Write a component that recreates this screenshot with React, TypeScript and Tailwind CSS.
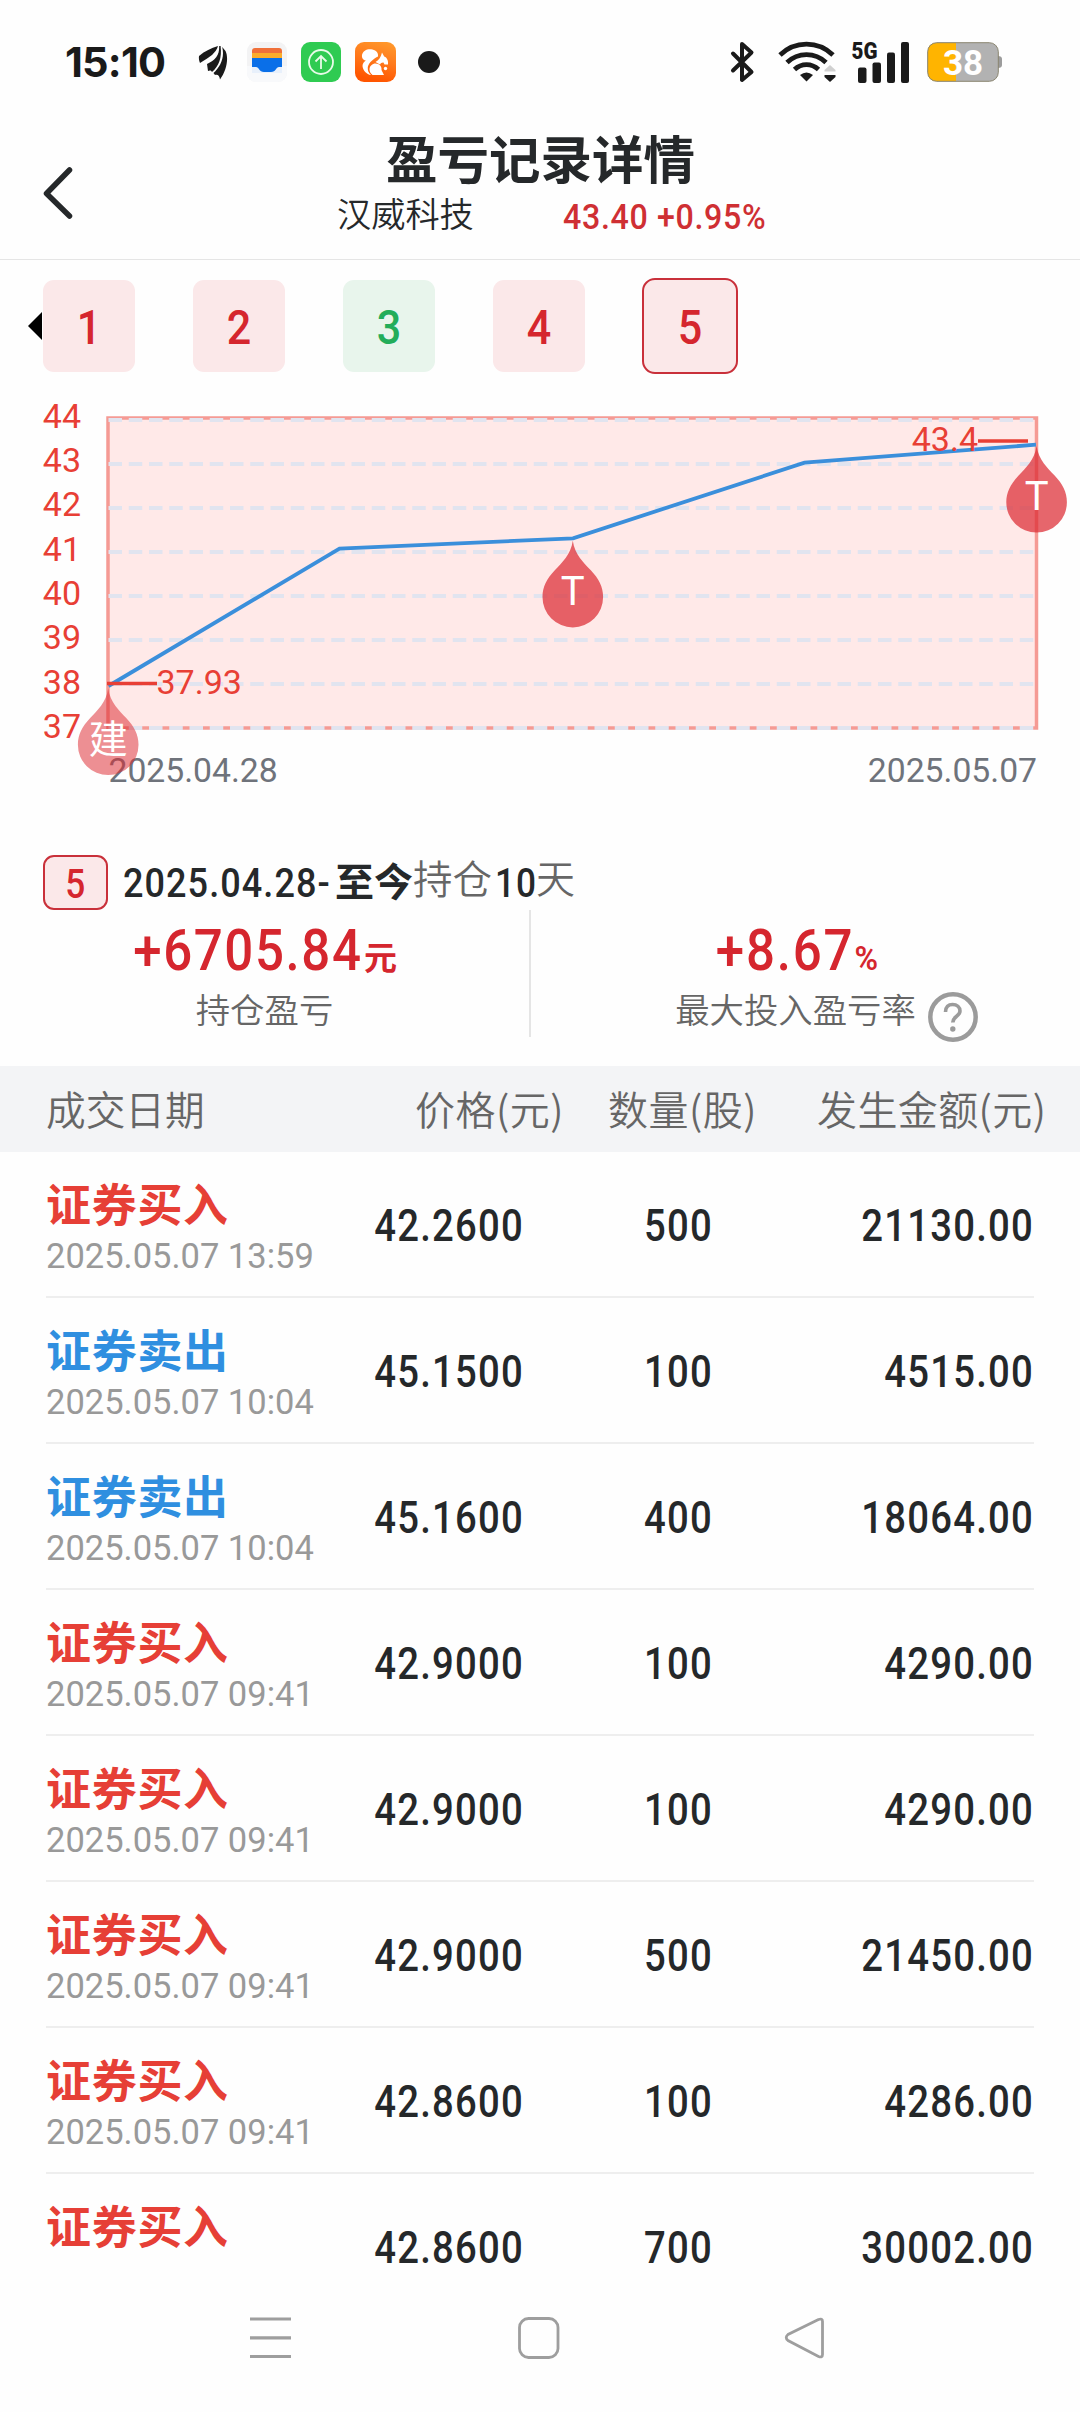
type Trade = {
  side: "buy" | "sell";
  time: string;
  price: string;
  amount: string;
  total: string;
};

const trades: Trade[] = [
  { side: "buy", time: "2025.05.07 13:59", price: "42.2600", amount: "500", total: "21130.00" },
  { side: "sell", time: "2025.05.07 10:04", price: "45.1500", amount: "100", total: "4515.00" },
  { side: "sell", time: "2025.05.07 10:04", price: "45.1600", amount: "400", total: "18064.00" },
  { side: "buy", time: "2025.05.07 09:41", price: "42.9000", amount: "100", total: "4290.00" },
  { side: "buy", time: "2025.05.07 09:41", price: "42.9000", amount: "100", total: "4290.00" },
  { side: "buy", time: "2025.05.07 09:41", price: "42.9000", amount: "500", total: "21450.00" },
  { side: "buy", time: "2025.05.07 09:41", price: "42.8600", amount: "100", total: "4286.00" },
  { side: "buy", time: "", price: "42.8600", amount: "700", total: "30002.00" },
];

const tabs = [
  { id: 1, profit: true },
  { id: 2, profit: true },
  { id: 3, profit: false },
  { id: 4, profit: true },
  { id: 5, profit: true },
];

const axis = [44, 43, 42, 41, 40, 39, 38, 37];

// price -> y inside the chart svg
const priceY = (price: number) => 328 - (price - 37) * 44;

const StatusBar = () => (
  <div className="flex h-[124px] flex-none items-center pl-[65px] text-[#1a1a1a]">
    <span className="w-[133px] pt-px font-['Inter'] text-[41.5px] font-bold leading-none tracking-[-0.8px]">
      15:10
    </span>
    <svg width="30" height="36" viewBox="0 0 30 36" fill="#1a1a1a">
      <path d="M1 12C7 7 13 4 20 2C18 9 12 13 2 19C1 17 .6 14 1 12Z" />
      <path d="M21.200 2C21.500 12 17 16 9 20L10 27C12 26 13.500 26.500 14 28C21 22 24 14 22.600 2Z" />
      <path d="M24.200 3C27 14 22 23 15.500 29L17 31C20 30 21.500 32 22 35.500C28.500 27 31 14 27.500 7Z" />
    </svg>
    <svg className="ml-[19px]" width="40" height="40" viewBox="0 0 40 40">
      <rect width="40" height="40" rx="9" fill="#f3f3f4" />
      <path d="M0 24h40v7a9 9 0 0 1-9 9H9a9 9 0 0 1-9-9Z" fill="#f8f9fb" />
      <path d="M5 24h30v7H5Z" fill="#e8f0fb" />
      <path d="M5 9a3 3 0 0 1 3-3h24a3 3 0 0 1 3 3v6H5Z" fill="#f0703a" />
      <path d="M5 11h30v7H5Z" fill="#fbac2c" />
      <path d="M5 16h30v9h-3c-3 0-3 5-8 5h-7c-5 0-5-5-8-5H5Z" fill="#0a6fe8" />
    </svg>
    <svg className="ml-[14px]" width="40" height="40" viewBox="0 0 40 40" fill="none">
      <rect width="40" height="40" rx="9" fill="#2fcb52" />
      <g stroke="#e8fbe9" strokeWidth="1.800">
        <circle cx="20" cy="20" r="12" />
        <path d="M20 27V14M14.500 19.500L20 14l5.500 5.500" />
      </g>
    </svg>
    <svg className="ml-[14px]" width="41" height="40" viewBox="0 0 41 40">
      <defs>
        <linearGradient id="squirrel" x1=".9" y1="0" x2=".6" y2="1">
          <stop offset="0" stopColor="#ff9a2c" />
          <stop offset=".5" stopColor="#ff7a1c" />
          <stop offset="1" stopColor="#ff5500" />
        </linearGradient>
      </defs>
      <rect width="41" height="40" rx="9" fill="url(#squirrel)" />
      <g fill="#fff">
        <path d="M7 13C8 8 13 6.500 17.500 7.500C21.500 8.500 23.500 11 23 14.500C19 16.500 14 20 12.800 25C12.500 28 13.500 31 16 33C11.500 32.500 8 28.500 7.500 24C7.500 21.500 9 19.500 11 18.500C8.500 18.500 6.500 16 7 13Z" />
        <path d="M27 10.500L29.200 14.500C32 15.500 33.500 18.500 33 22.500H29.500L28.500 20.500C27 20.300 25.500 21 25 22.500L20.500 20C23.500 18.500 26 15 27 10.500Z" />
        <path d="M14.500 27.500C14.500 24 17.500 21.500 20.500 21.500C24.500 21.500 27 24.500 26.500 28L29 33H17.500C15.500 31.500 14.500 29.500 14.500 27.500Z" />
        <circle cx="30.500" cy="26.500" r="1.700" />
      </g>
    </svg>
    <span className="ml-[22px] h-[22px] w-[22px] rounded-full bg-[#1a1a1a]" />
    <svg className="ml-[290px]" width="25" height="42" viewBox="0 0 25 42" fill="none" stroke="#1a1a1a" strokeWidth="4" strokeLinejoin="round" strokeLinecap="round">
      <path d="M3 12.500L21.500 31L12 39V3l9.500 8.500L3 29.500" />
    </svg>
    <svg className="ml-[23px]" width="58" height="42" viewBox="0 0 58 42" fill="none" stroke="#1a1a1a" strokeWidth="4.800">
      <path d="M2 14C17-.5 40-.5 55 14" />
      <path d="M9 21.500C20 11 37 11 48 21.500" />
      <path d="M16.500 28.500C23.500 22 33.500 22 40.500 28.500" />
      <path d="M22 34q6.500-5 13 0l-6.500 6.500Z" fill="#1a1a1a" stroke="none" />
      <path d="M46.500 30.500v-1.500L52 24l5.500 5v1.500Z" fill="#d0d0d0" stroke="none" />
      <path d="M46.500 34v2l5.500 5l5.500-5v-2Z" fill="#1a1a1a" stroke="none" />
    </svg>
    <svg className="-mt-[10px] ml-[14px]" width="60" height="52" viewBox="-2 -10 60 52" fill="#1a1a1a">
      <text x="-.5" y="18" fontSize="24.500" fontWeight="900" fontFamily="Roboto, sans-serif" textLength="26" lengthAdjust="spacingAndGlyphs">
        5G
      </text>
      <rect x="6" y="26.500" width="8.500" height="15.500" rx="2" />
      <rect x="20.500" y="21.500" width="8.500" height="20.500" rx="2" />
      <rect x="35" y="11.500" width="8" height="30.500" rx="2" />
      <rect x="49" y="1" width="8" height="41" rx="2" />
    </svg>
    <svg className="ml-[17px]" width="76" height="40" viewBox="0 0 76 40">
      <path d="M71 14q4 0 4 3v6q0 3-4 3Z" fill="#9c9c9c" />
      <rect x=".7" y=".7" width="70.600" height="38.600" rx="9" fill="#b2b2b2" />
      <path d="M29 .7H10Q.7 .7 .7 10V30Q.7 39.300 10 39.300H29Z" fill="#ffb400" />
      <rect x=".7" y=".7" width="70.600" height="38.600" rx="9" fill="none" stroke="#8a8570" strokeWidth="1" />
      <text x="36" y="32.500" fontSize="35" fontWeight="700" fill="#fff" textAnchor="middle" fontFamily="Roboto, sans-serif">
        38
      </text>
    </svg>
  </div>
);

const Header = () => (
  <div className="flex h-[136px] flex-none border-b border-[#e5e5e5] text-[#25282a]">
    <div className="w-[337px] pl-[42px] pt-[42px]">
      <svg width="32" height="54" viewBox="0 0 32 54" fill="none" stroke="#25282a" strokeWidth="5.500" strokeLinecap="round" strokeLinejoin="round">
        <path d="M27.500 4L4.500 27.500L27.500 50" />
      </svg>
    </div>
    <div className="w-[440px]">
      <h1 className="ml-[49px] mt-[3px] whitespace-nowrap font-['Noto_Sans_CJK_SC'] text-[51.5px] font-bold leading-[60px]">
        盈亏记录详情
      </h1>
      <div className="flex items-center">
        <span className="w-[226px] flex-none font-['Noto_Sans_CJK_SC'] text-[34.2px] font-[350] leading-[50px]">
          汉威科技
        </span>
        <span className="mt-[10px] origin-left scale-x-[.92] whitespace-nowrap font-['Roboto'] text-[35px] font-medium leading-none tracking-[0.7px] text-[#cf2f33]">
          43.40 +0.95%
        </span>
      </div>
    </div>
  </div>
);

const Tabs = () => (
  <div className="mt-[18px] flex h-[96px] flex-none items-center pl-[28px]">
    <svg width="14" height="28" viewBox="0 0 14 28">
      <path d="M14 0V28L0 14Z" fill="#000" />
    </svg>
    <div className="ml-px flex items-center gap-[58px] font-['Roboto'] text-[49px] font-medium leading-none">
      {tabs.map((tab) => (
        <div
          key={tab.id}
          className={`flex h-[92px] w-[92px] items-center justify-center rounded-[11px] pt-[3px] ${
            tab.profit ? "bg-[#fbe8e9] text-[#d5262e]" : "bg-[#e8f5ec] text-[#23ad5a]"
          } ${tab.id === 5 ? "ml-px outline-2 outline-[#c9303a]" : ""}`}
        >
          <span className="scale-x-[.88]">{tab.id}</span>
        </div>
      ))}
    </div>
  </div>
);

const Drop = ({ x, y, label, opacity }: { x: number; y: number; label: string; opacity: number }) => (
  <g transform={`translate(${x} ${y})`}>
    <path
      d="M0 0C2 14 11 22 18 29.500C26 38 30.300 46 30.300 56.300A30.300 30.300 0 0 1-30.300 56.300C-30.300 46-26 38-18 29.500C-11 22-2 14 0 0Z"
      fill="#dd2b33"
      fillOpacity={opacity}
    />
    <text
      y={label === "T" ? 63.8 : 64}
      fontSize={label === "T" ? 40 : 39}
      fill="#fff"
      textAnchor="middle"
      fontFamily="Roboto, 'Noto Sans CJK SC', sans-serif"
    >
      {label}
    </text>
  </g>
);

const Chart = () => (
  <svg
    className="mt-[16px] flex-none"
    width="1080"
    height="410"
    viewBox="0 -10 1080 410"
    fontFamily="Roboto, sans-serif"
    fontSize="34"
  >
    <rect x="108" y="18" width="928.500" height="310" fill="#ffe9e8" stroke="#f59a94" strokeWidth="3.500" />
    {axis.map((price, i) => (
      <g key={price}>
        <line
          x1="108.500"
          x2="1035"
          y1={priceY(price)}
          y2={priceY(price)}
          stroke="#e1e4ef"
          strokeWidth="4"
          strokeDasharray="13.500 6.750"
        />
        <text x="81" y={27.7 + i * 44.3} textAnchor="end" fill="#e83f35">
          {price}
        </text>
      </g>
    ))}
    <polyline
      points="108.500,286 339.500,148.700 573,138.300 804.500,62.700 1036,44.700"
      fill="none"
      stroke="#3b8fdb"
      strokeWidth="3.800"
    />
    <path d="M107 283.500h50M978 41h50" stroke="#e83f35" strokeWidth="3.500" />
    <text x="156.500" y="293.500" fill="#e83f35">37.93</text>
    <text x="978" y="51" textAnchor="end" fill="#e83f35">43.4</text>
    <g fill="#6f737b" fontSize="33.700">
      <text x="108.500" y="381.700">2025.04.28</text>
      <text x="1037" y="381.700" textAnchor="end">2025.05.07</text>
    </g>
    <Drop x={108.2} y={288.5} label="建" opacity={0.53} />
    <Drop x={572.8} y={140.8} label="T" opacity={0.72} />
    <Drop x={1036.6} y={46} label="T" opacity={0.72} />
  </svg>
);

const Summary = () => (
  <>
    <div className="mt-[55px] flex h-[55px] flex-none items-start pl-[43px] font-['Roboto'] text-[40px] leading-none text-[#25282a]">
      <span className="flex h-[55px] w-[65px] items-center justify-center rounded-[11px] border-2 border-[#c9303a] bg-[#fbe8e9] pt-[4px] font-medium text-[#d5262e]">
        <span className="scale-x-[.88]">5</span>
      </span>
      <span className="ml-[15px] mt-[9px] w-[212px] origin-left scale-x-[.9] whitespace-nowrap font-medium tracking-[1.2px]">
        2025.04.28-
      </span>
      <span className="mt-[5px] font-['Noto_Sans_CJK_SC'] text-[39px] font-bold">至今</span>
      <span className="mt-[2px] font-['Noto_Sans_CJK_SC'] text-[39.5px] font-[350] text-[#666]">持仓</span>
      <span className="ml-[3px] mt-[9px] w-[41px] origin-left scale-x-[.88] font-medium tracking-[1.2px]">10</span>
      <span className="mt-[2px] font-['Noto_Sans_CJK_SC'] text-[39px] font-[350] text-[#666]">天</span>
    </div>
    <div className="flex h-[156px] flex-none">
      <div className="flex h-[127px] w-[531px] flex-col items-center border-r-2 border-[#e5e5e5] pt-[10px]">
        <p className="flex w-[397px] items-baseline justify-end self-start font-['Roboto'] text-[58px] font-medium leading-[60px] text-[#d5262e]">
          <span className="origin-right scale-x-[.88] tracking-[1.8px]">+6705.84</span>
          <span className="ml-px font-['Noto_Sans_CJK_SC'] text-[33px] font-bold leading-none">元</span>
        </p>
        <p className="font-['Noto_Sans_CJK_SC'] text-[34.4px] font-[350] leading-[56px] text-[#666]">持仓盈亏</p>
      </div>
      <div className="flex w-[530px] flex-col items-center pt-[10px]">
        <p className="flex w-[347px] items-baseline justify-end self-start font-['Roboto'] text-[58px] font-medium leading-[60px] text-[#d5262e]">
          <span className="origin-right scale-x-[.88] tracking-[2px]">+8.67</span>
          <span className="-ml-px origin-right scale-x-[.94] text-[34px] font-semibold leading-none">%</span>
        </p>
        <div className="ml-[62px] flex">
          <p className="whitespace-nowrap font-['Noto_Sans_CJK_SC'] text-[34.4px] font-[350] leading-[56px] text-[#666]">
            最大投入盈亏率
          </p>
          <svg className="ml-[11px] mt-[11px]" width="52" height="52" viewBox="0 0 52 52" fill="none" stroke="#9b9b9b">
            <circle cx="26" cy="26" r="22.700" strokeWidth="4.500" />
            <path d="M18.500 21C18.500 16 21.500 13.500 25.500 13.500C30 13.500 33 16 33 20C33 25.500 25.800 25 25.800 31.500" strokeWidth="3.600" />
            <circle cx="25.800" cy="38" r="2.700" fill="#9b9b9b" stroke="none" />
          </svg>
        </div>
      </div>
    </div>
  </>
);

const TradeRow = ({ trade }: { trade: Trade }) => (
  <div className="mx-[46px] flex h-[146px] flex-none items-center border-b-2 border-[#eee] font-['Roboto'] text-[43.5px] font-medium leading-none tracking-[1.4px] text-[#25282a]">
    <div className="h-full w-[278px] pt-[25px]">
      <p
        className={`whitespace-nowrap font-['Noto_Sans_CJK_SC'] text-[45px] font-bold leading-[52px] tracking-[0.7px] ${
          trade.side === "buy" ? "text-[#e63f36]" : "text-[#2f8fe0]"
        }`}
      >
        {trade.side === "buy" ? "证券买入" : "证券卖出"}
      </p>
      <p className="mt-[7px] whitespace-nowrap text-[34.5px] font-normal leading-[40px] tracking-normal text-[#999]">
        {trade.time}
      </p>
    </div>
    <span className="mt-[5px] w-[200px] origin-right scale-x-[.88] text-right">{trade.price}</span>
    <span className="mt-[5px] w-[189px] origin-right scale-x-[.88] text-right">{trade.amount}</span>
    <span className="mt-[5px] flex-1 origin-right scale-x-[.88] text-right">{trade.total}</span>
  </div>
);

const NavBar = () => (
  <div className="absolute inset-x-0 bottom-0 flex h-[147px] bg-[#fefefe] pl-[250px] pt-[52px]">
    <svg width="41" height="42" viewBox="0 0 41 42" stroke="#9e9e9e" strokeWidth="3.200">
      <path d="M0 2h41M0 20.800h41M0 39.500h41" />
    </svg>
    <svg className="ml-[227px]" width="42" height="42" viewBox="0 0 42 42">
      <rect x="1.500" y="1.500" width="38.500" height="39" rx="9" fill="none" stroke="#9e9e9e" strokeWidth="2.800" />
    </svg>
    <svg className="ml-[224px]" width="42" height="42" viewBox="0 0 42 42">
      <path
        d="M34.500 2.500L4 17.500Q.5 20.500 4 23.500L34.500 39.500Q38.500 41 38.500 37.500V4.500Q38.500 1 34.500 2.500Z"
        fill="none"
        stroke="#9e9e9e"
        strokeWidth="2.800"
      />
    </svg>
  </div>
);

export default function App() {
  return (
    <div className="relative flex h-[2412px] w-[1080px] flex-col overflow-hidden bg-[#fefefe]">
      <StatusBar />
      <Header />
      <Tabs />
      <Chart />
      <Summary />
      <div className="flex h-[86px] flex-none items-center whitespace-nowrap bg-[#f3f4f6] pb-[3px] pl-[46px] font-['Noto_Sans_CJK_SC'] text-[40px] font-[350] leading-none text-[#666]">
        <span className="w-[369px] text-[39.7px]">成交日期</span>
        <span className="w-[193px] tracking-[0.5px]">价格(元)</span>
        <span className="w-[209px] tracking-[0.5px]">数量(股)</span>
        <span className="tracking-[0.4px]">发生金额(元)</span>
      </div>
      {trades.map((trade, i) => (
        <TradeRow key={i} trade={trade} />
      ))}
      <NavBar />
    </div>
  );
}
